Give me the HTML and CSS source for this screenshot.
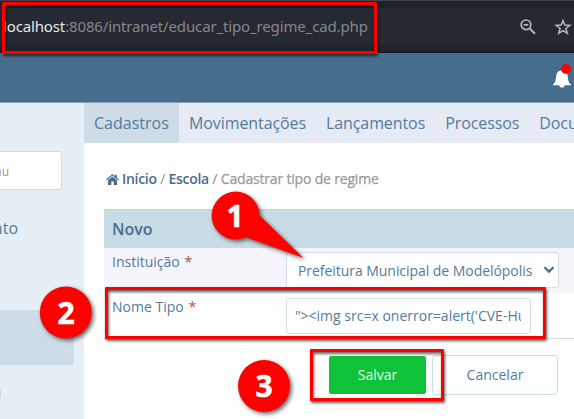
FILE: index.html
```html
<!DOCTYPE html>
<html lang="pt-BR">
<head>
<meta charset="utf-8">
<title>Cadastrar tipo de regime</title>
<link rel="stylesheet" href="styles.css">
</head>
<body>
<div class="browser">
  <div class="urlbar">
    <span class="url"><b>localhost</b>:8086/intranet/educar_tipo_regime_cad.php</span>
    <svg class="zoom" width="18" height="18" viewBox="0 0 18 18" fill="none" stroke="#b8b8b8" stroke-width="1.7"><circle cx="7" cy="6.8" r="4.8"/><path d="M10.6 10.4L16 15.8" stroke-width="2"/><path d="M4.7 6.8h4.6"/></svg>
    <svg class="star" width="18" height="18" viewBox="0 0 18 18" fill="none" stroke="#b8b8b8" stroke-width="1.5"><path d="M9 2.5l1.8 4.6 5 .3-3.9 3.1 1.4 4.9L9 12.700l-4.300 2.700 1.400-4.900L2.200 7.400l5-.3z"/></svg>
  </div>
</div>
<header class="topbar">
  <svg width="24" height="28" viewBox="0 0 24 28"><path fill="#fff" d="M4 22.500c3-2.200 2.800-5.500 3.200-9C7.600 10.500 9.700 8.500 13 8.300c3.700.2 5.400 2.400 5.700 5.600.4 3.200.3 6.300 3.300 8.600v.8h-6.300c-.3 1.500-1.200 2.500-2.700 2.500s-2.500-1-2.800-2.500H4z"/><circle cx="17" cy="7" r="5" fill="red"/></svg>
</header>
<div class="page">
  <aside class="sidebar">
    <div class="search">nu</div>
    <div class="side-item">nto</div>
    <div class="side-active"></div>
    <div class="side-dot"></div>
  </aside>
  <main class="main">
    <nav class="tabs"><a class="active">Cadastros</a><a>Movimentações</a><a>Lançamentos</a><a>Processos</a><a>Documentos</a></nav>
    <div class="crumbs">
      <svg width="13" height="11" viewBox="0 0 13 11" fill="#476d8d"><path d="M6.500 0L9 2.100V.7h1.800v2.900L13 5.500l-.8.9-5.700-4.800L.8 6.400 0 5.500z"/><path d="M2 6.300l4.500-3.800L11 6.300V11H7.700V7.500H5.300V11H2z"/></svg>
      <span class="trail"><b>Início</b> / <b>Escola</b> / <i>Cadastrar tipo de regime</i></span>
    </div>
    <section class="form">
      <div class="form-head">Novo</div>
      <div class="row odd">
        <label>Instituição <em>*</em></label>
        <div class="select"><span>Prefeitura Municipal de Modelópolis</span><svg width="12" height="8" viewBox="0 0 12 8" fill="none" stroke="#476d8d" stroke-width="2.300"><path d="M1.500 1.200L6 5.600l4.500-4.400"/></svg></div>
      </div>
      <div class="row">
        <label>Nome Tipo <em>*</em></label>
        <div class="input"><span>"&gt;&lt;img src=x onerror=alert('CVE-Hunters')&gt;</span></div>
      </div>
      <div class="actions"><div class="btn save">Salvar</div><div class="btn cancel">Cancelar</div></div>
    </section>
  </main>
</div>
<div class="mark m-url"></div>
<div class="mark m-name"></div>
<div class="mark m-save"></div>
<svg class="callouts" width="574" height="419" viewBox="0 0 574 419">
  <g fill="red"><path d="M259 215L303.500 258L244 236.500z"/><circle cx="235.600" cy="215.600" r="24"/><circle cx="65.800" cy="312.500" r="26"/><circle cx="264" cy="386" r="26"/></g>
</svg>
<div class="num n1">1</div><div class="num n2">2</div><div class="num n3">3</div>
</body>
</html>
```
FILE: styles.css
```css
* { box-sizing: border-box; }
body { margin: 0; width: 574px; height: 419px; overflow: hidden; position: relative; font-family: "Open Sans", "Noto Sans", sans-serif; color: #527c9c; background: #fff; }
.browser { height: 53px; background: #23222c; border-top: 1px solid #40424c; border-bottom: 1px solid #15151e; padding-top: 7px; }
.urlbar { height: 37px; background: #242932; display: flex; align-items: center; padding-left: 3px; }
.url { width: 516px; margin-top: -2px; white-space: nowrap; font-family: "Noto Sans", sans-serif; font-size: 15px; letter-spacing: -.14px; color: #85888c; }
.url b { font-weight: 400; color: #e8e8e8; }
.zoom { margin-top: 1px; }
.star { margin-left: 17px; flex: none; margin-top: 1px; }
.topbar { height: 50px; background: #476d8d; border-bottom: 1px solid #87a2bb; padding: 9px 0 0 549px; }
.topbar svg { display: block; }
.page { display: flex; height: 316px; }
.sidebar { width: 84px; background: #e6eff6; }
.search { width: 62px; height: 39px; margin-top: 48px; border: 1px solid #c9dce7; border-left: 0; border-radius: 0 3px 3px 0; background: #fff; color: #999; font-size: 12px; line-height: 40px; padding-right: 52px; display: flex; justify-content: flex-end; overflow: hidden; }
.side-item { width: 18px; margin-top: 26px; height: 24px; line-height: 24px; font-size: 16px; display: flex; justify-content: flex-end; }
.side-active { margin-top: 70px; width: 74px; height: 55px; background: #cddce7; border-radius: 0 3px 3px 0; }
.side-dot { width: 1px; height: 8px; margin-top: 25px; background: #c5d7e3; }
.main { width: 490px; overflow: hidden; }
.tabs { display: flex; height: 40px; background: #e6eaf5; font-size: 16px; letter-spacing: -.09px; line-height: 41px; white-space: nowrap; width: 620px; }
.tabs a { padding: 0 10px; flex: none; }
.tabs .active { background: #cddce7; width: 95px; letter-spacing: 0; padding-right: 0; }
.crumbs { display: flex; align-items: center; margin: 26px 0 0 22px; height: 20px; font-size: 14px; letter-spacing: -.18px; color: #8a8a8a; white-space: nowrap; }
.crumbs svg { flex: none; margin-right: 3px; }
.crumbs .trail { margin-top: -1px; }
.crumbs b { font-weight: 600; color: #476d8d; letter-spacing: -.3px; }
.crumbs i { font-style: normal; font-weight: 500; color: #999; -webkit-text-stroke: .25px #999; }
.form { margin: 20px 0 0 20px; }
.form-head { height: 39px; background: #c8dce5; border-top: 1px solid #bfd4df; padding-left: 8px; font-size: 16px; line-height: 38px; font-weight: 600; color: #476d8d; }
.row { display: flex; height: 46px; padding-top: 5px; background: #fff; border-bottom: 1px solid #cbdde8; }
.row.odd { height: 45px; padding-top: 4px; background: #f5f4fa; border: 0; }
label { width: 182px; padding-left: 8px; font-size: 14px; line-height: 17px; }
.odd label { line-height: 19px; }
label em { font-style: normal; font-size: 15px; line-height: 1; margin-left: 1px; color: #b05b3b; }
.select, .input { height: 36px; border: 1px solid #cfe0ea; border-radius: 3px; background: #fff; white-space: nowrap; font-size: 14px; line-height: 35px; }
.select { width: 273px; padding: 0 3px 0 11px; display: flex; justify-content: space-between; align-items: center; letter-spacing: -.05px; }
.input { width: 245px; padding: 0 9px 0 8px; line-height: 34px; }
.input span { display: block; overflow: hidden; }
.actions { display: flex; padding: 16px 0 0 224px; gap: 5px; }
.btn { height: 40px; border-radius: 3px; text-align: center; font-size: 14px; line-height: 39px; }
.save { width: 99px; background: #0fc239; color: #e5ffe9; border: 1px solid #fff; line-height: 38px; }
.cancel { width: 126px; border: 1px solid #cbdde8; line-height: 38px; }
.mark { position: absolute; border: 3px solid red; border-radius: 1px; box-shadow: 1px 2px 3px rgba(0,0,0,.65), inset 1px 2px 3px rgba(0,0,0,.6); }
.m-url { left: 2px; top: 2px; width: 375px; height: 52px; }
.m-name { left: 105px; top: 287px; width: 441px; height: 52px; }
.m-save { left: 310px; top: 349px; width: 134px; height: 52px; }
.callouts { position: absolute; left: 0; top: 0; filter: drop-shadow(2px 2px 2px rgba(0,0,0,.6)); }
.num { position: absolute; width: 40px; height: 40px; line-height: 40px; text-align: center; font-family: "Open Sans", sans-serif; font-weight: 700; font-size: 30px; -webkit-text-stroke: .6px #fff; color: #fff; }
.n1 { left: 215px; top: 196px; }
.n2 { left: 46px; top: 293px; }
.n3 { left: 244px; top: 366px; }
```
